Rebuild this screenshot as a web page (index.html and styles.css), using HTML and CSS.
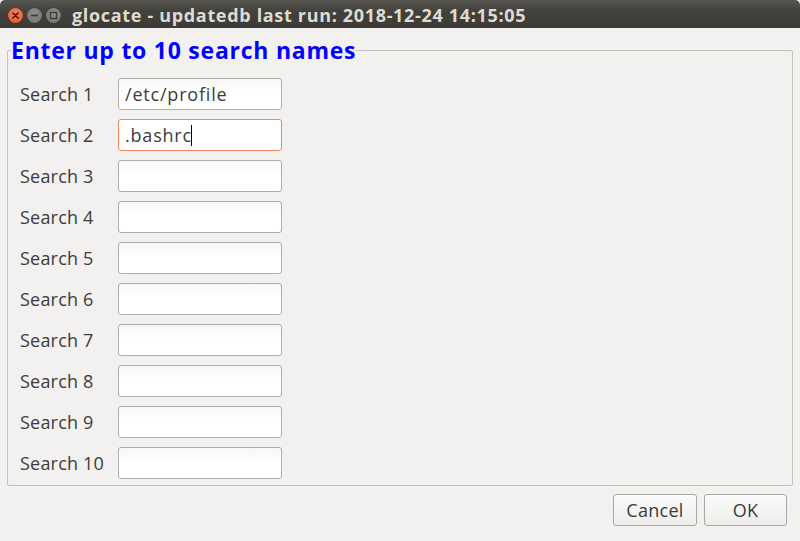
FILE: index.html
```html
<!DOCTYPE html>
<html>
<head>
<meta charset="utf-8">
<link rel="stylesheet" href="styles.css">
</head>
<body>
<div class="window">
  <div class="titlebar">
    <div class="controls">
      <span class="wbtn close"><svg width="15" height="15" viewBox="0 0 15 15"><path d="M5 5L10 10M10 5L5 10" stroke="#3a1a0e" stroke-width="1.6" stroke-linecap="round"/></svg></span>
      <span class="wbtn"><svg width="15" height="15" viewBox="0 0 15 15"><path d="M4 7.5H11" stroke="#3c3b37" stroke-width="1.6"/></svg></span>
      <span class="wbtn"><svg width="15" height="15" viewBox="0 0 15 15"><rect x="4.5" y="4.5" width="6" height="6" fill="none" stroke="#3c3b37" stroke-width="1.3"/></svg></span>
    </div>
    <div class="title">glocate - updatedb last run: 2018-12-24 14:15:05</div>
  </div>
  <div class="content">
    <fieldset class="frame">
      <legend class="legend">Enter up to 10 search names</legend>
      <div class="rows">
        <span class="label">Search 1</span><div class="entry">/etc/profile</div>
        <span class="label">Search 2</span><div class="entry focus">.bashrc<span class="caret"></span></div>
        <span class="label">Search 3</span><div class="entry"></div>
        <span class="label">Search 4</span><div class="entry"></div>
        <span class="label">Search 5</span><div class="entry"></div>
        <span class="label">Search 6</span><div class="entry"></div>
        <span class="label">Search 7</span><div class="entry"></div>
        <span class="label">Search 8</span><div class="entry"></div>
        <span class="label">Search 9</span><div class="entry"></div>
        <span class="label">Search 10</span><div class="entry"></div>
      </div>
    </fieldset>
    <div class="buttons">
      <button class="btn cancel">Cancel</button>
      <button class="btn ok">OK</button>
    </div>
  </div>
</div>
</body>
</html>
```

FILE: styles.css
```css
html, body {
  margin: 0;
  padding: 0;
  background: #ffffff;
}
.window {
  width: 800px;
  height: 541px;
  display: flex;
  flex-direction: column;
  background: #f2f1f0;
  font-family: "Open Sans", "DejaVu Sans", sans-serif;
  overflow: hidden;
}
.titlebar {
  height: 28px;
  flex: none;
  display: flex;
  align-items: center;
  background: linear-gradient(#57554f, #42413c 40%, #3c3b37);
  border-radius: 5px 5px 0 0;
}
.controls {
  display: flex;
  gap: 4px;
  padding-left: 8px;
  padding-top: 3px;
}
.wbtn {
  width: 15px;
  height: 15px;
  border-radius: 50%;
  background: radial-gradient(circle at 50% 35%, #8e8c86, #74726c);
  box-shadow: 0 0 0 0.5px #34332f;
  display: flex;
}
.wbtn.close {
  background: radial-gradient(circle at 50% 35%, #f7845a, #e2511e);
}
.title {
  margin-left: 11px;
  padding-top: 1px;
  color: #dfdbd2;
  font-weight: bold;
  font-size: 18px;
  letter-spacing: 0.67px;
  white-space: nowrap;
}
.content {
  flex: 1;
  display: flex;
  flex-direction: column;
}
.frame {
  margin: 9px 7px 0 7px;
  padding: 15px 0 6px 12px;
  border: 1px solid #c4c2bf;
  border-radius: 2px;
  min-width: 0;
}
.legend {
  margin-left: -9px;
  padding: 0;
  color: #0000ff;
  font-weight: bold;
  font-size: 23px;
  line-height: 26px;
  letter-spacing: 0.75px;
}
.rows {
  display: grid;
  grid-template-columns: 98px 164px;
  grid-auto-rows: 32px;
  row-gap: 9px;
  align-items: center;
}
.label {
  color: #3c3c3c;
  font-size: 18px;
  letter-spacing: 0.2px;
  white-space: nowrap;
}
.entry {
  box-sizing: border-box;
  height: 32px;
  border: 1px solid #afaeab;
  border-radius: 3px;
  background: linear-gradient(#f6f6f6, #ffffff 40%);
  padding-left: 6px;
  color: #3c3c3c;
  font-size: 18px;
  line-height: 30px;
  letter-spacing: 0.8px;
  display: flex;
  align-items: center;
}
.entry.focus {
  border-color: #f0865d;
  background: #ffffff;
}
.caret {
  display: inline-block;
  width: 1px;
  height: 21px;
  background: #000000;
  margin-left: -1px;
}
.buttons {
  display: flex;
  justify-content: flex-end;
  gap: 7px;
  padding: 8px 13px 0 0;
}
.btn {
  box-sizing: border-box;
  height: 32px;
  border: 1px solid #a8a7a4;
  border-radius: 3px;
  background: linear-gradient(#fbfbfb, #ededeb);
  color: #3c3c3c;
  font-family: "Open Sans", "DejaVu Sans", sans-serif;
  font-size: 18px;
  padding: 0 0 0 0;
  line-height: 30px;
  letter-spacing: 0.3px;
}
.cancel { width: 84px; }
.ok { width: 83px; }
```
